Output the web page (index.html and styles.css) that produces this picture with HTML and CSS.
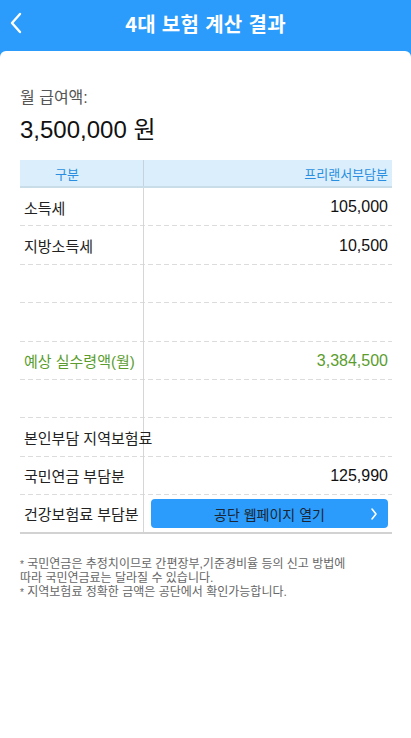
FILE: index.html
```html
<!DOCTYPE html>
<html lang="ko">
<head>
<meta charset="utf-8">
<link rel="stylesheet" href="styles.css">
</head>
<body>
<header class="topbar">
  <span class="back"><svg width="14" height="22" viewBox="0 0 14 22"><path d="M11 2 L3 11 L11 20" fill="none" stroke="#fff" stroke-width="2.4" stroke-linecap="round" stroke-linejoin="round"/></svg></span>
  <h1 class="title">4대 보험 계산 결과</h1>
</header>
<main class="card">
  <div class="label">월 급여액:</div>
  <div class="amount">3,500,000 원</div>
  <div class="table">
    <div class="row head"><div class="c1">구분</div><div class="c2">프리랜서부담분</div></div>
    <div class="row"><div class="c1">소득세</div><div class="c2">105,000</div></div>
    <div class="row"><div class="c1">지방소득세</div><div class="c2">10,500</div></div>
    <div class="row"><div class="c1"></div><div class="c2"></div></div>
    <div class="row"><div class="c1"></div><div class="c2"></div></div>
    <div class="row green"><div class="c1">예상 실수령액(월)</div><div class="c2">3,384,500</div></div>
    <div class="row"><div class="c1"></div><div class="c2"></div></div>
    <div class="row"><div class="c1 nowrap">본인부담 지역보험료</div><div class="c2"></div></div>
    <div class="row"><div class="c1">국민연금 부담분</div><div class="c2">125,990</div></div>
    <div class="row last"><div class="c1">건강보험료 부담분</div><div class="c2 btncell"><button class="btn"><span>공단 웹페이지 열기</span><svg class="chev" width="8" height="14" viewBox="0 0 8 14"><path d="M2 2 L6 7 L2 12" fill="none" stroke="#fff" stroke-width="1.6" stroke-linecap="round" stroke-linejoin="round"/></svg></button></div></div>
  </div>
  <div class="notes">
    <div class="line"><span class="ast">*</span> 국민연금은 추정치이므로 간편장부,기준경비율 등의 신고 방법에</div>
    <div class="line">따라 국민연금료는 달라질 수 있습니다.</div>
    <div class="line"><span class="ast">*</span> 지역보험료 정확한 금액은 공단에서 확인가능합니다.</div>
  </div>
</main>
</body>
</html>
```
FILE: styles.css
```css
* { box-sizing: border-box; }
html, body { margin: 0; padding: 0; }
body {
  background: #2b9cfb;
  font-family: "Liberation Sans", "Noto Sans CJK KR", sans-serif;
  color: #111;
  height: 738px;
  overflow: hidden;
}
.topbar {
  height: 51px;
  display: flex;
  align-items: center;
  justify-content: center;
  position: relative;
}
.back {
  position: absolute;
  left: 9px;
  top: 12px;
  display: flex;
}
.title {
  margin: 0;
  color: #fff;
  font-size: 20px;
  font-weight: bold;
  font-family: "Noto Sans CJK KR", sans-serif;
  letter-spacing: 0.3px;
  line-height: 26px;
  margin-top: -4px;
}
.card {
  background: #fff;
  border-radius: 6px 6px 0 0;
  height: 687px;
  padding: 36px 19px 0 20px;
}
.label {
  font-size: 16px;
  line-height: 22px;
  color: #555;
}
.amount {
  margin-top: 6px;
  font-size: 24px;
  line-height: 30px;
  color: #111;
}
.table {
  margin-top: 15px;
  display: flex;
  flex-direction: column;
}
.row {
  display: grid;
  grid-template-columns: 124px 1fr;
  height: 38.4px;
  background-image: repeating-linear-gradient(90deg, #dcdcdc 0 5px, transparent 5px 8px);
  background-size: 100% 1px;
  background-repeat: no-repeat;
  background-position: bottom left;
  font-size: 15px;
}
.row .c1 {
  border-right: 1px solid #d6d6d6;
  display: flex;
  align-items: center;
  padding-left: 4px;
  color: #222;
}
.row .c2 {
  display: flex;
  align-items: center;
  justify-content: flex-end;
  padding-right: 4px;
  font-size: 16px;
  color: #111;
}
.nowrap { white-space: nowrap; }
.row.head {
  height: 28px;
  background: #daeefc;
  border-bottom: 2px solid #c9dde9;
  font-size: 13px;
}
.row.head .c1 {
  padding-left: 35px;
  color: #2a8ee0;
  border-right-color: #c5d3dc;
}
.row.head .c2 {
  font-size: 13px;
  color: #2a8ee0;
}
.row.green .c1, .row.green .c2 { color: #5a9d2e; }
.row.last {
  background-image: none;
  border-bottom: 2px solid #d2d2d2;
}
.btncell { padding: 0 6px 0 7px; }
.btn {
  width: 100%;
  height: 29px;
  margin-top: 1px;
  border: none;
  border-radius: 4px;
  background: #2b9cfb;
  color: #1b2533;
  font-family: "Noto Sans CJK KR", sans-serif;
  font-size: 14px;
  display: flex;
  align-items: center;
  justify-content: center;
  position: relative;
  padding: 0;
}
.chev {
  position: absolute;
  right: 10px;
  top: 8px;
}
.notes {
  margin: 23px 0 0 0;
  font-size: 12px;
  color: #666;
  font-family: "Liberation Sans", "Noto Sans CJK KR", sans-serif;
  display: flex;
  flex-direction: column;
}
.line {
  height: 14px;
  line-height: 14px;
  white-space: nowrap;
}
.ast { font-size: 10px; }
```
